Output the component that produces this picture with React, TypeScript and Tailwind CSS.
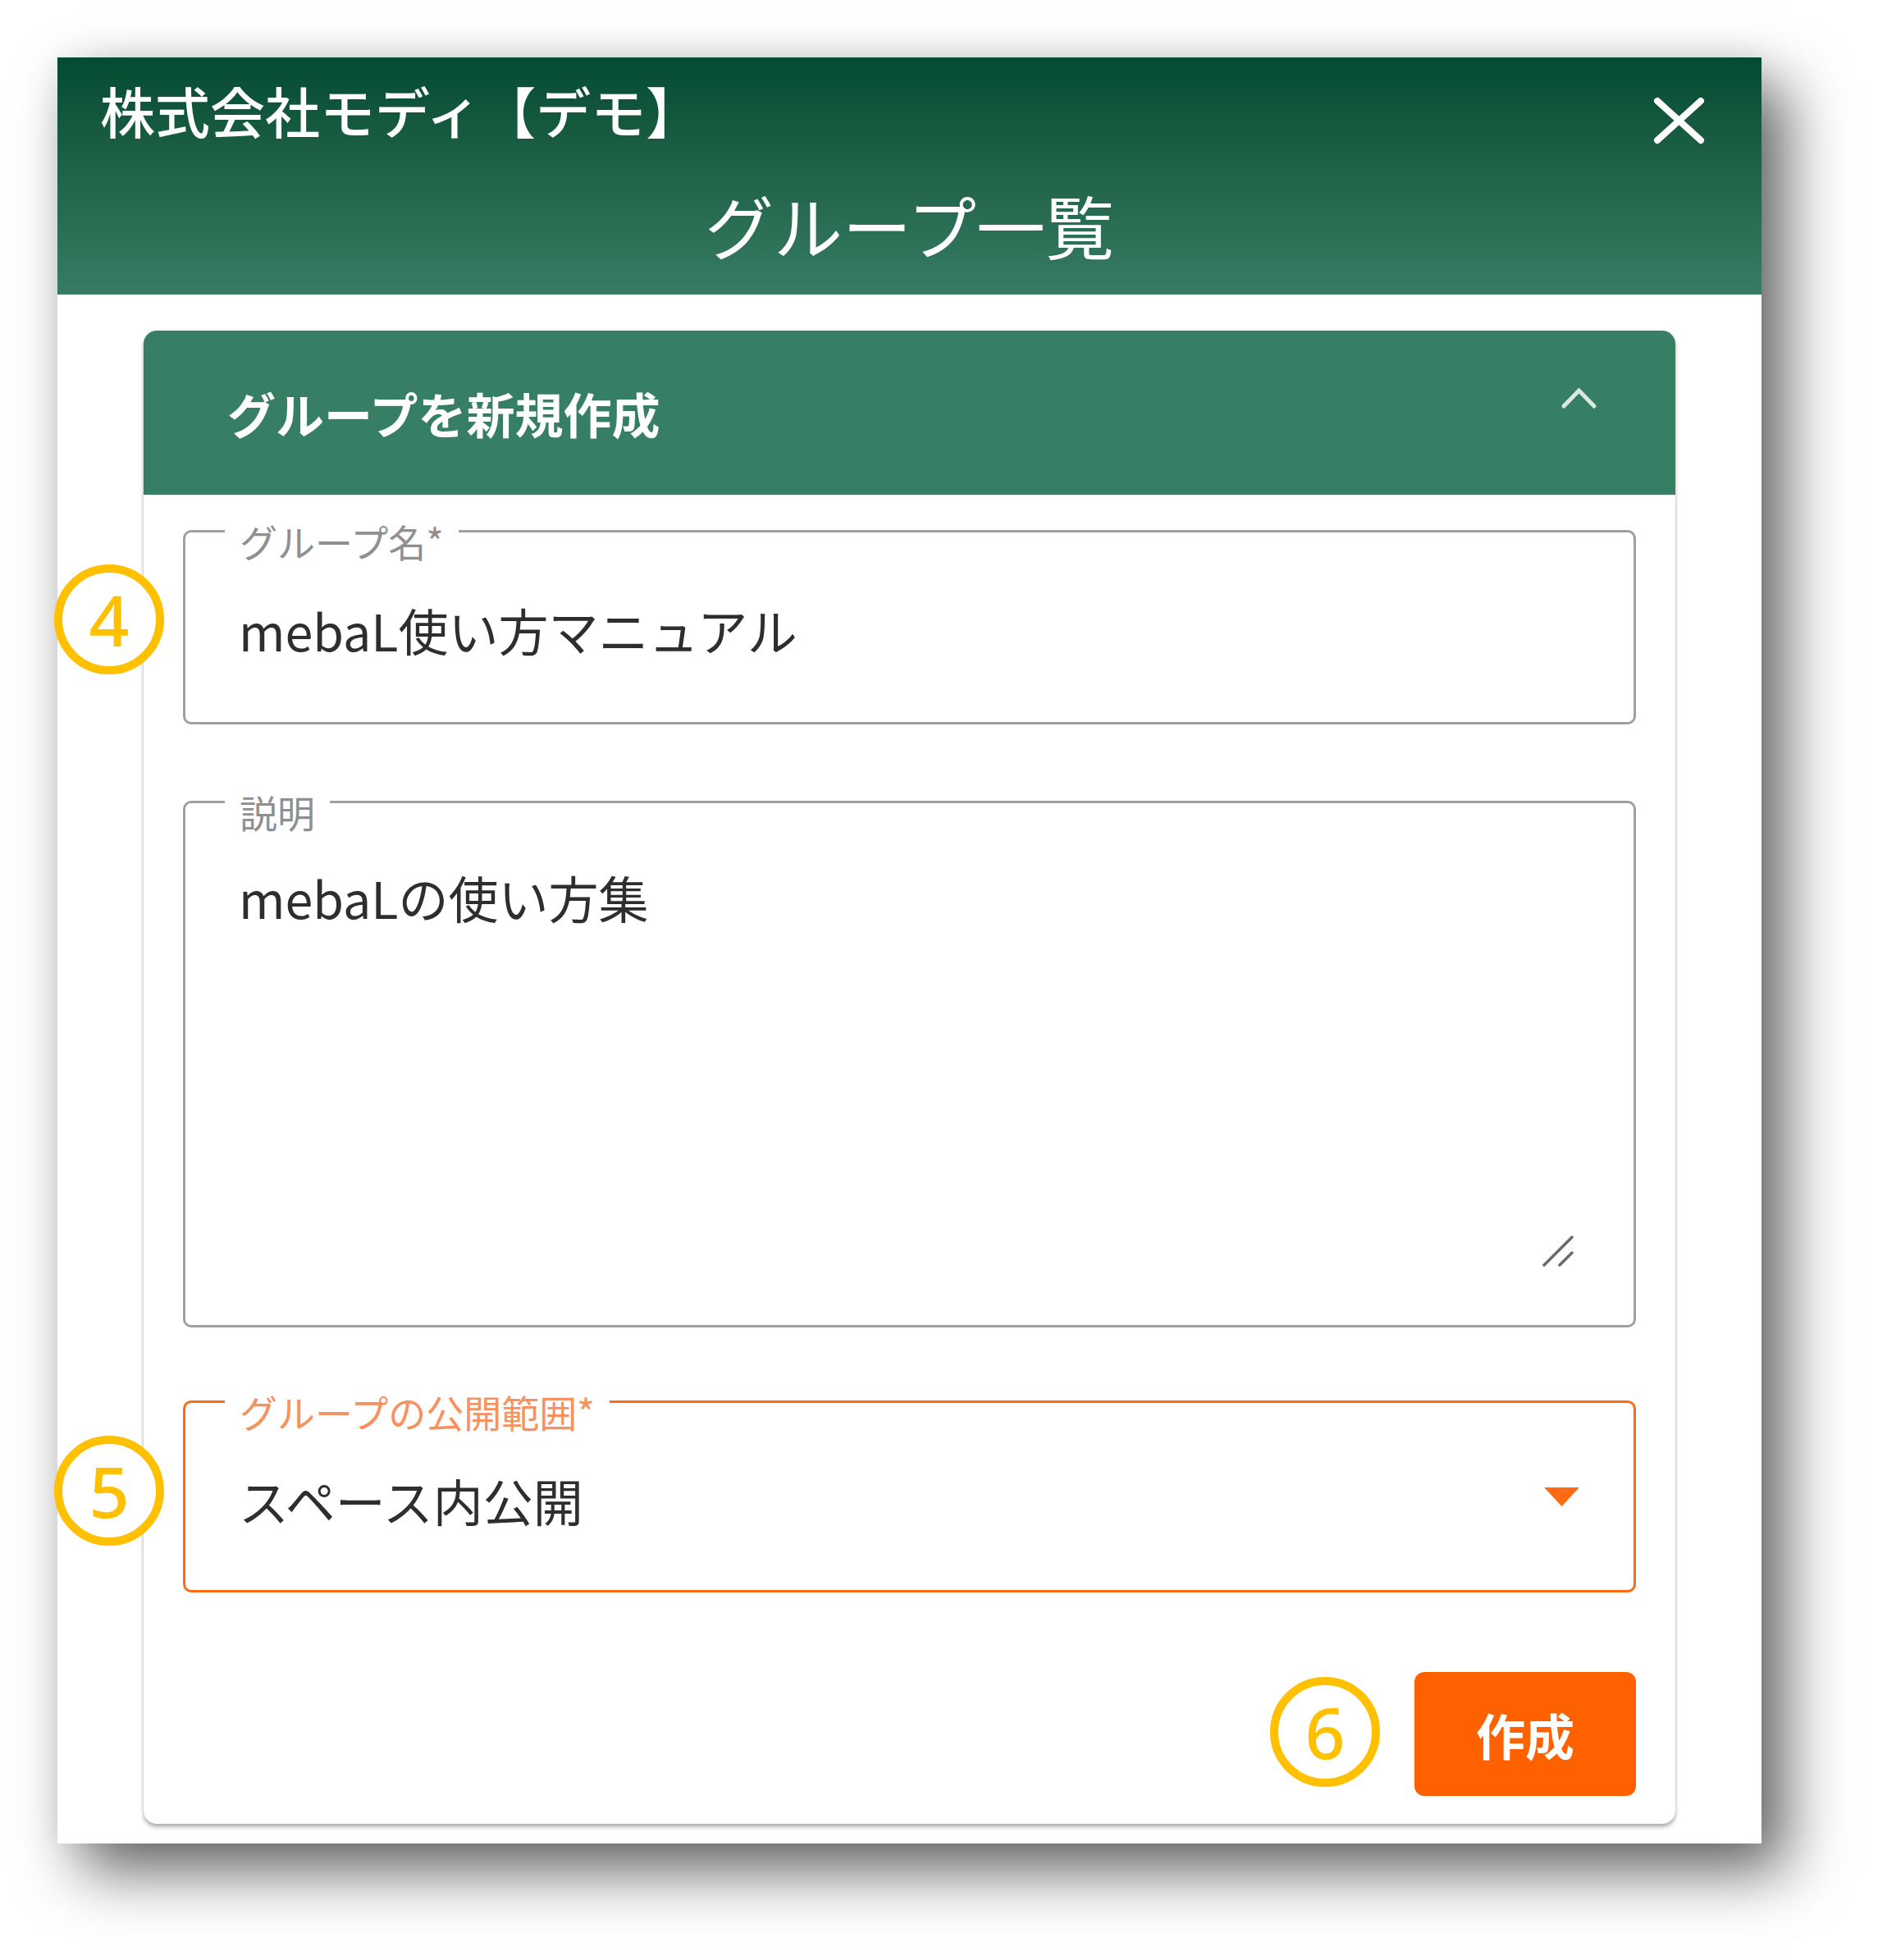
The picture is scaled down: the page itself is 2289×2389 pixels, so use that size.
import React from 'react';

const FONT = "font-['Noto_Sans_CJK_JP','Noto_Sans',sans-serif]";

const Badge: React.FC<{ n: string; className: string }> = ({ n, className }) => (
  <div
    className={
      `absolute w-[134px] h-[134px] rounded-full border-[10px] border-[#ffc000] bg-white ` +
      `flex items-center justify-center ${className}`
    }
  >
    <span className="font-['Noto_Sans','Liberation_Sans',sans-serif] font-medium text-[86px] leading-none text-[#ffc000]">
      {n}
    </span>
  </div>
);

const FieldLabel: React.FC<{ text: string; orange?: boolean }> = ({ text, orange }) => (
  <span
    className={
      `absolute left-[48px] top-[-13px] px-[18px] bg-white text-[46px] leading-none ` +
      (orange ? 'text-[#f7915f]' : 'text-[#8f8f8f]')
    }
  >
    {text}
  </span>
);

export default function App() {
  return (
    <div className={`relative w-[2289px] h-[2389px] bg-white pt-[70px] pl-[70px] ${FONT}`}>
      {/* modal panel */}
      <div className="w-[2077px] h-[2177px] bg-white flex flex-col shadow-[30px_34px_70px_rgba(0,0,0,0.6),0_0_40px_rgba(0,0,0,0.08)]">
        {/* header */}
        <div className="h-[289px] shrink-0 bg-gradient-to-b from-[#034b31] to-[#377c63] text-white">
          <div className="flex items-start justify-between pl-[52px] pr-[69px] pt-[30px]">
            <span className="text-[67px] leading-none font-medium">株式会社モディ【デモ】</span>
            <svg width="63" height="58" viewBox="0 0 63 58" className="mt-[18px]">
              <path d="M5 5 L58 53 M58 5 L5 53" stroke="white" strokeWidth="8" strokeLinecap="round" />
            </svg>
          </div>
          <div className="mt-[56px] text-center text-[84px] leading-none">グループ一覧</div>
        </div>

        {/* body */}
        <div className="px-[105px] pt-[44px]">
          <div className="rounded-[16px] bg-white shadow-[0_4px_5px_rgba(0,0,0,0.3),0_0_4px_rgba(0,0,0,0.06)]">
            <div className="h-[200px] rounded-t-[16px] bg-[#377f64] flex items-center justify-between pl-[102px] pr-[95px]">
              <span className="text-[59px] leading-none font-bold text-white">グループを新規作成</span>
              <svg width="45" height="29" viewBox="0 0 45 29" className="mb-[38px]">
                <polyline points="4,25 22.5,6 41,25" fill="none" stroke="#dde8e3" strokeWidth="5" strokeLinecap="round" />
              </svg>
            </div>

            <div className="px-[48px] pt-[43px] pb-[34px] flex flex-col">
              {/* group name */}
              <div className="relative h-[237px] rounded-[10px] border-[3px] border-[#a0a0a0] flex items-center pl-[65px] pt-[6px]">
                <FieldLabel text="グループ名*" />
                <span className="text-[61px] leading-none text-[#2e2e2e]">mebaL使い方マニュアル</span>
              </div>

              {/* description */}
              <div className="relative mt-[93px] h-[642px] rounded-[10px] border-[3px] border-[#a0a0a0] pl-[65px] pt-[84px]">
                <FieldLabel text="説明" />
                <span className="text-[61px] leading-none text-[#2e2e2e]">mebaLの使い方集</span>
                <svg width="40" height="40" viewBox="0 0 40 40" className="absolute right-[72px] bottom-[70px]">
                  <path d="M3 37 L37 3 M22 37 L37 22" stroke="#6a6a6a" strokeWidth="3.5" strokeLinecap="round" />
                </svg>
              </div>

              {/* visibility select */}
              <div className="relative mt-[89px] h-[234px] rounded-[10px] border-[3px] border-[#ff6a10] flex items-center justify-between pl-[65px] pr-[66px] pt-[8px]">
                <FieldLabel text="グループの公開範囲*" orange />
                <span className="text-[61px] leading-none text-[#2e2e2e]">スペース内公開</span>
                <svg width="43" height="23" viewBox="0 0 43 23" className="mb-[8px]">
                  <polygon points="0,0 43,0 21.5,23" fill="#ff6a13" />
                </svg>
              </div>

              <div className="mt-[97px] flex justify-end">
                <button className="w-[270px] h-[151px] rounded-[12px] bg-[#ff6000] text-white text-[60px] font-bold leading-none">
                  作成
                </button>
              </div>
            </div>
          </div>
        </div>
      </div>

      {/* annotation markers */}
      <Badge n="4" className="left-[66px] top-[688px]" />
      <Badge n="5" className="left-[66px] top-[1750px]" />
      <Badge n="6" className="left-[1548px] top-[2044px]" />
    </div>
  );
}
